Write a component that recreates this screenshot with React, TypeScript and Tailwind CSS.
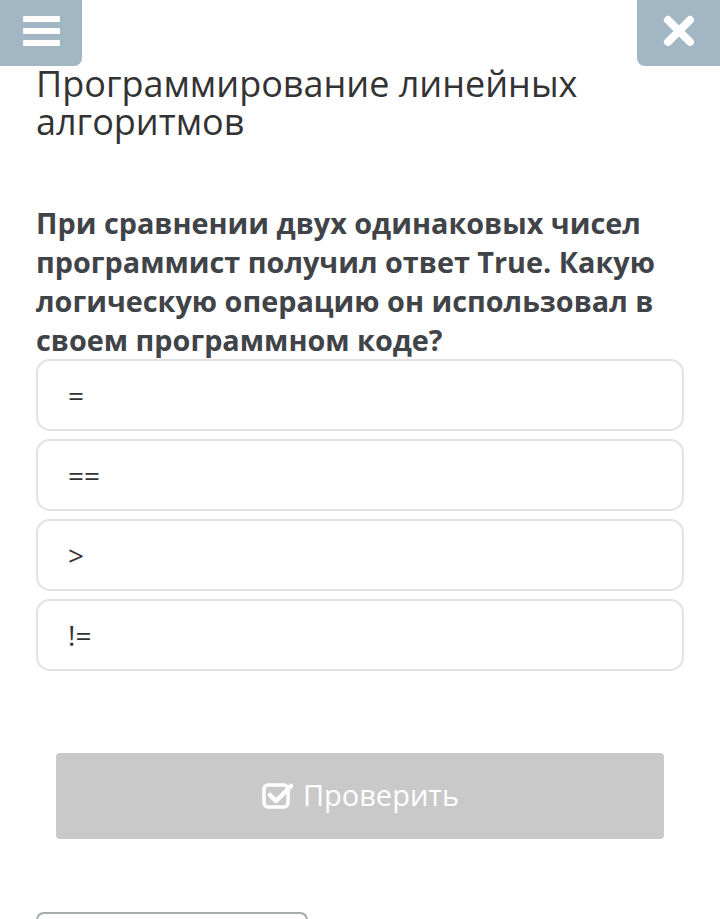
import React from "react";

const options = ["=", "==", ">", "!="];

export default function App() {
  return (
    <div className="w-[720px] h-[919px] overflow-hidden bg-white" style={{ fontFamily: '"Open Sans", "Noto Sans", sans-serif' }}>
      <div className="flex justify-between h-[66px]">
        <div className="w-[82px] h-[66px] bg-[#a3b6c3] rounded-br-[8px] flex flex-col items-center justify-center gap-[6px] pb-[4px]">
          <div className="w-[37px] h-[6px] bg-white rounded-[1px]" />
          <div className="w-[37px] h-[6px] bg-white rounded-[1px]" />
          <div className="w-[37px] h-[6px] bg-white rounded-[1px]" />
        </div>
        <div className="w-[83px] h-[66px] bg-[#a3b6c3] rounded-bl-[8px] flex items-center justify-center pb-[4px]">
          <svg width="32" height="32" viewBox="0 0 32 32">
            <path d="M5 5 L27 27 M27 5 L5 27" stroke="white" strokeWidth="8" strokeLinecap="round" />
          </svg>
        </div>
      </div>
      <div className="px-[36px]">
        <h1 className="text-[36px] leading-[38px] text-[#333] font-normal mt-[-1px]">Программирование линейных алгоритмов</h1>
        <p className="mt-[62px] text-[28.8px] leading-[39px] font-bold text-[#404347]">
          При сравнении двух одинаковых чисел программист получил ответ True. Какую логическую операцию он использовал в своем программном коде?
        </p>
        <div className="mt-0 flex flex-col gap-[8px]">
          {options.map((o) => (
            <div key={o} className="h-[72px] border-2 border-[#e3e3e3] rounded-[14px] flex items-center pl-[30px] text-[28px] text-[#333]">
              {o}
            </div>
          ))}
        </div>
        <div className="px-[20px] mt-[82px]">
          <div className="h-[86px] bg-[#c9c9c9] rounded-[4px] flex items-center justify-center gap-[10px] text-white text-[29px]">
            <svg width="32" height="30" viewBox="0 0 32 30" fill="none">
              <rect x="3" y="4" width="24" height="22" rx="4" stroke="white" strokeWidth="3.5" />
              <path d="M9 14 L15 20 L30 5" stroke="white" strokeWidth="4.5" strokeLinecap="round" strokeLinejoin="round" />
            </svg>
            <span className="pb-[2px]">Проверить</span>
          </div>
        </div>
        <div className="mt-[73px] w-[272px] h-[20px] border-2 border-b-0 border-[#a4acac] rounded-t-[8px]" />
      </div>
    </div>
  );
}
